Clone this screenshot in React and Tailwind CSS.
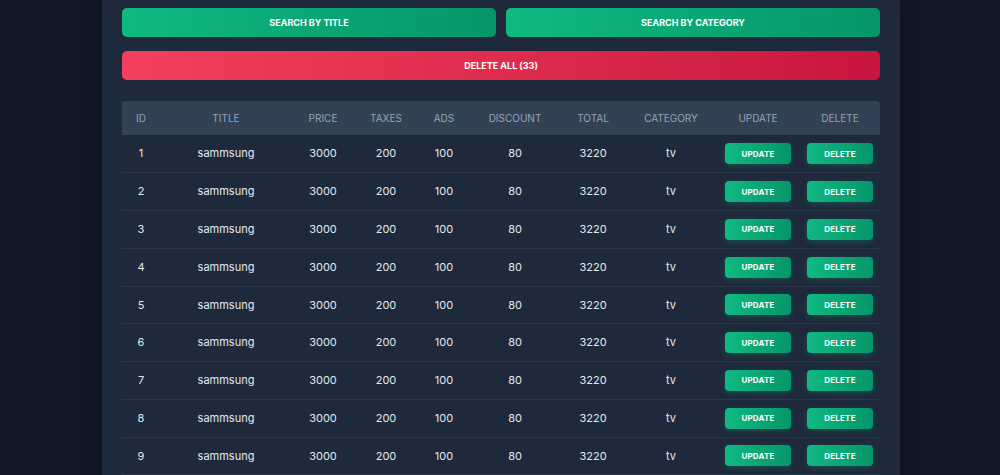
import React from 'react';

const columns = [
  { key: 'id', label: 'ID', w: 'w-[38px]' },
  { key: 'title', label: 'TITLE', w: 'w-[132px]' },
  { key: 'price', label: 'PRICE', w: 'w-[62px]' },
  { key: 'taxes', label: 'TAXES', w: 'w-[64px]' },
  { key: 'ads', label: 'ADS', w: 'w-[52px]' },
  { key: 'discount', label: 'DISCOUNT', w: 'w-[90px]' },
  { key: 'total', label: 'TOTAL', w: 'w-[66px]' },
  { key: 'category', label: 'CATEGORY', w: 'w-[90px]' },
  { key: 'update', label: 'UPDATE', w: 'w-[84px]' },
  { key: 'delete', label: 'DELETE', w: 'w-[80px]' },
];

const products = Array.from({ length: 9 }, (_, i) => ({
  id: i + 1,
  title: 'sammsung',
  price: 3000,
  taxes: 200,
  ads: 100,
  discount: 80,
  total: 3220,
  category: 'tv',
}));

const SmallButton = ({ children }) => (
  <button className="w-[66px] h-[21px] rounded-[4px] bg-gradient-to-r from-[#10b981] to-[#059669] text-[8px] font-bold tracking-wide text-white shadow-[0_2px_6px_rgba(16,185,129,0.25)]">
    {children}
  </button>
);

const App = () => {
  return (
    <div className="min-h-[475px] bg-[#111827] font-['Inter',sans-serif] text-[#e2e8f0]">
      <div className="ml-[102px] w-[798px] bg-[#1e293b] px-5 pt-2 pb-6 shadow-[0_0_20px_rgba(0,0,0,0.35)]">
        <div className="flex gap-[10px]">
          <button className="flex-1 h-[29px] rounded-[5px] bg-gradient-to-r from-[#10b981] to-[#059669] text-[9px] font-bold text-white">
            SEARCH BY TITLE
          </button>
          <button className="flex-1 h-[29px] rounded-[5px] bg-gradient-to-r from-[#10b981] to-[#059669] text-[9px] font-bold text-white">
            SEARCH BY CATEGORY
          </button>
        </div>
        <button className="mt-[14px] w-full h-[29px] rounded-[5px] bg-gradient-to-r from-[#f43f5e] to-[#c8143f] text-[9px] font-bold text-white">
          DELETE ALL (33)
        </button>

        <table className="mt-[21px] w-full table-fixed border-collapse text-[11px]">
          <thead>
            <tr className="bg-[#334155] h-[34px]">
              {columns.map((c, i) => (
                <th
                  key={c.key}
                  className={`${c.w} font-normal text-[10px] text-[#94a3b8] ${i === 0 ? 'rounded-tl-[4px]' : ''} ${i === columns.length - 1 ? 'rounded-tr-[4px]' : ''}`}
                >
                  {c.label}
                </th>
              ))}
            </tr>
          </thead>
          <tbody>
            {products.map((p) => (
              <tr key={p.id} className="h-[37.75px] border-b border-[#2a3649] text-center">
                <td>{p.id}</td>
                <td>{p.title}</td>
                <td>{p.price}</td>
                <td>{p.taxes}</td>
                <td>{p.ads}</td>
                <td>{p.discount}</td>
                <td>{p.total}</td>
                <td>{p.category}</td>
                <td><SmallButton>UPDATE</SmallButton></td>
                <td><SmallButton>DELETE</SmallButton></td>
              </tr>
            ))}
          </tbody>
        </table>
      </div>
    </div>
  );
};

export default App;
